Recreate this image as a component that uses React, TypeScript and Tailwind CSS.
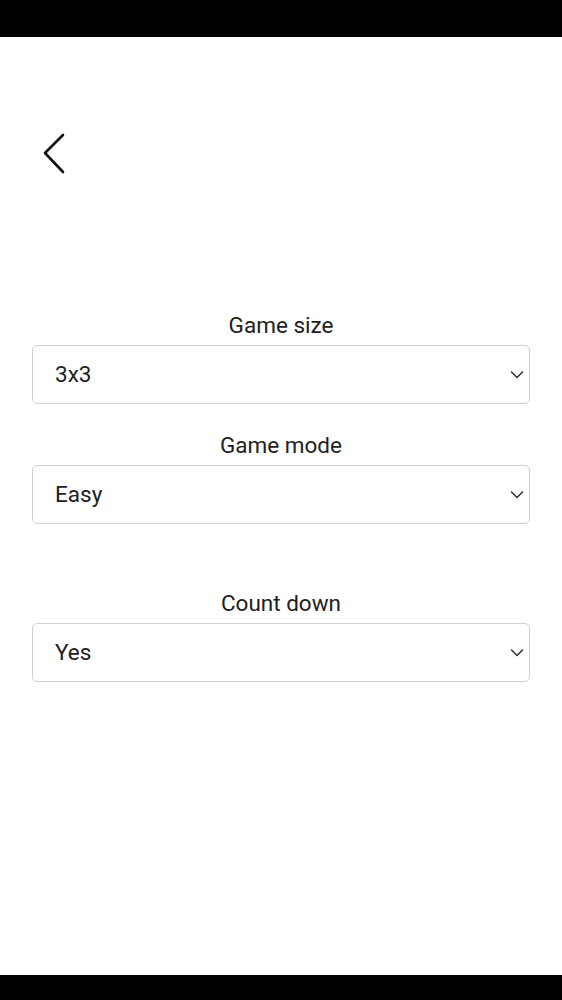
import React from "react";

const options: { label: string; value: string; choices: string[]; gapTop: string }[] = [
  { label: "Game size", value: "3x3", choices: ["3x3", "4x4", "5x5"], gapTop: "mt-[138px]" },
  { label: "Game mode", value: "Easy", choices: ["Easy", "Medium", "Hard"], gapTop: "mt-[29px]" },
  { label: "Count down", value: "Yes", choices: ["Yes", "No"], gapTop: "mt-[67px]" },
];

const Chevron = () => (
  <svg width="14" height="9" viewBox="0 0 14 9" className="pointer-events-none absolute right-[6px] top-1/2 -translate-y-1/2">
    <polyline points="1.5,1.5 7,7 12.5,1.5" fill="none" stroke="#333" strokeWidth="1.6" strokeLinecap="round" strokeLinejoin="round" />
  </svg>
);

export default function App() {
  return (
    <div className="w-[562px] h-[1000px] flex flex-col bg-white text-[#212121]" style={{ fontFamily: "Roboto, 'Noto Sans', sans-serif" }}>
      <div className="h-[37px] bg-black shrink-0" />
      <main className="flex-1 flex flex-col px-8">
        <button className="self-start ml-[11px] mt-[96px] w-[22px] h-[42px]" aria-label="Back">
          <svg width="22" height="42" viewBox="0 0 22 42">
            <polyline points="20,2 2,20 20,39" fill="none" stroke="#111" strokeWidth="2.6" strokeLinecap="round" strokeLinejoin="round" />
          </svg>
        </button>

        {options.map(o => (
          <div key={o.label} className={o.gapTop}>
            <label className="block text-center text-[22.5px] leading-6 mb-2">{o.label}</label>
            <div className="relative">
              <select
                defaultValue={o.value}
                className="appearance-none w-full h-[59px] border border-[#d0d0d0] rounded-[5px] bg-white pl-[22px] pr-8 text-[22.5px] text-[#212121] outline-none"
              >
                {o.choices.map(c => (
                  <option key={c} value={c}>{c}</option>
                ))}
              </select>
              <Chevron />
            </div>
          </div>
        ))}
      </main>
      <div className="h-[25px] bg-black shrink-0" />
    </div>
  );
}
